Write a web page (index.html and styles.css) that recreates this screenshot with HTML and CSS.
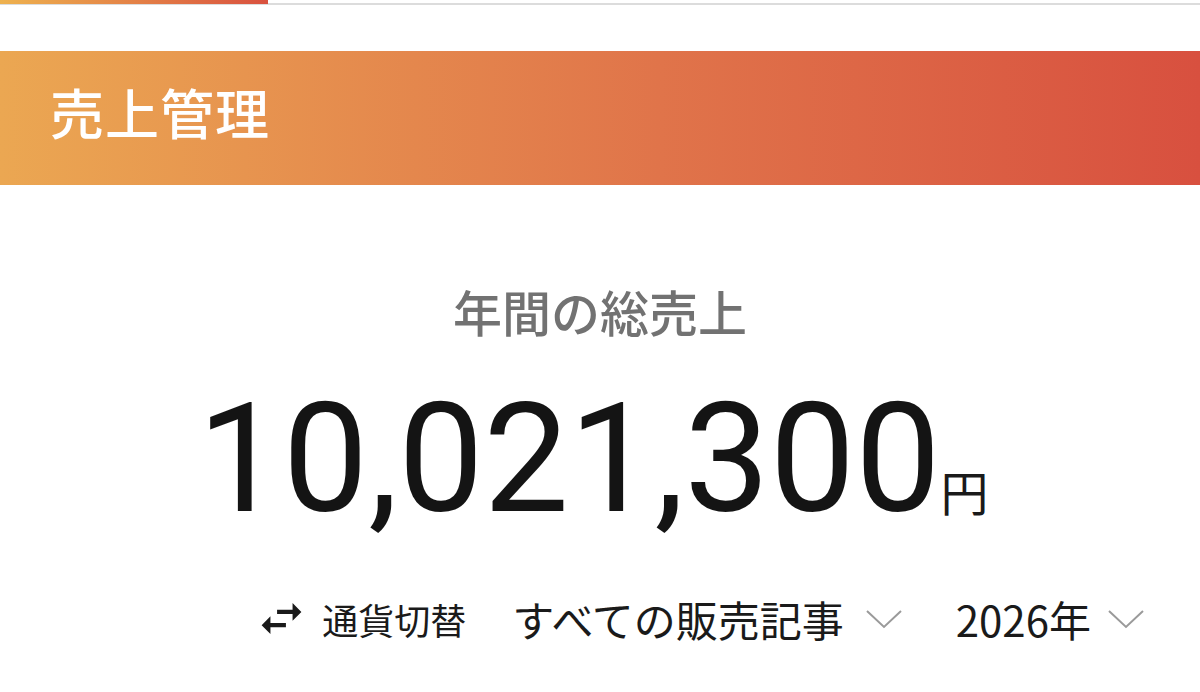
FILE: index.html
```html
<!DOCTYPE html>
<html lang="ja">
<head>
  <meta charset="UTF-8">
  <meta name="viewport" content="width=device-width, initial-scale=1.0">
  <title>売上管理</title>
  <link rel="stylesheet" href="styles.css">
</head>
<body>
  <div class="progress">
    <div class="progress-bar"></div>
  </div>
  <div class="page-header">
    <h1>売上管理</h1>
  </div>
  <div class="summary">
    <div class="summary-label">年間の総売上</div>
    <div class="summary-amount">
      <span class="amount">10,021,300</span><span class="unit">円</span>
    </div>
  </div>
  <div class="filters">
    <div class="currency-switch">
      <svg class="swap-icon" viewBox="0 0 24 24">
        <path d="M6.99 11L3 15l3.99 4v-3H14v-2H6.99v-3zM21 9l-3.99-4v3H10v2h7.01v3L21 9z"/>
      </svg>
      <span>通貨切替</span>
    </div>
    <div class="select">
      <span>すべての販売記事</span>
      <svg class="chevron" viewBox="0 0 36 20">
        <polyline points="1,2 18,18 35,2"/>
      </svg>
    </div>
    <div class="select select-year">
      <span>2026年</span>
      <svg class="chevron" viewBox="0 0 36 20">
        <polyline points="1,2 18,18 35,2"/>
      </svg>
    </div>
  </div>
</body>
</html>
```

FILE: styles.css
```css
body {
  margin: 0;
  background: #fff;
  font-family: Roboto, "Noto Sans CJK JP", sans-serif;
  color: #1a1a1a;
}

.progress {
  height: 3px;
  border-bottom: 2px solid #dcdcdc;
}

.progress-bar {
  width: 268px;
  height: 4px;
  background: linear-gradient(to right, #eeb24f, #d9513f);
}

.page-header {
  margin-top: 46px;
  height: 134px;
  display: flex;
  align-items: center;
  padding-left: 50px;
  background: linear-gradient(to right, #eba752, #e0744a 55%, #d8503f);
}

.page-header h1 {
  margin: 0 0 14px;
  color: #fff;
  font-family: "Noto Sans CJK JP", sans-serif;
  font-size: 54px;
  font-weight: 500;
  letter-spacing: 1px;
}

.summary {
  display: flex;
  flex-direction: column;
  align-items: center;
  padding-top: 99px;
}

.summary-label {
  font-family: "Noto Sans CJK JP", sans-serif;
  font-size: 49px;
  font-weight: 500;
  color: #727272;
  line-height: 54px;
}

.summary-amount {
  display: flex;
  align-items: baseline;
  margin-top: 39px;
  padding-right: 14px;
}

.amount {
  font-size: 152px;
  line-height: 164px;
  font-weight: 400;
  color: #141414;
}

.unit {
  font-family: "Noto Sans CJK JP", sans-serif;
  font-size: 48px;
}

.filters {
  display: flex;
  justify-content: flex-end;
  align-items: center;
  padding-right: 56px;
  margin-top: 47px;
  font-family: "Noto Sans CJK JP", sans-serif;
}

.currency-switch {
  display: flex;
  align-items: center;
  font-size: 36px;
  margin-right: 46px;
}

.swap-icon {
  width: 53px;
  height: 53px;
  fill: #1a1a1a;
  margin-right: 14px;
}

.select {
  display: flex;
  align-items: center;
  font-size: 42px;
}

.select + .select {
  margin-left: 54px;
}

.chevron {
  width: 36px;
  height: 20px;
  margin-left: 22px;
  fill: none;
  stroke: #9a9a9a;
  stroke-width: 2;
}

.select-year .chevron {
  margin-left: 17px;
}
```
